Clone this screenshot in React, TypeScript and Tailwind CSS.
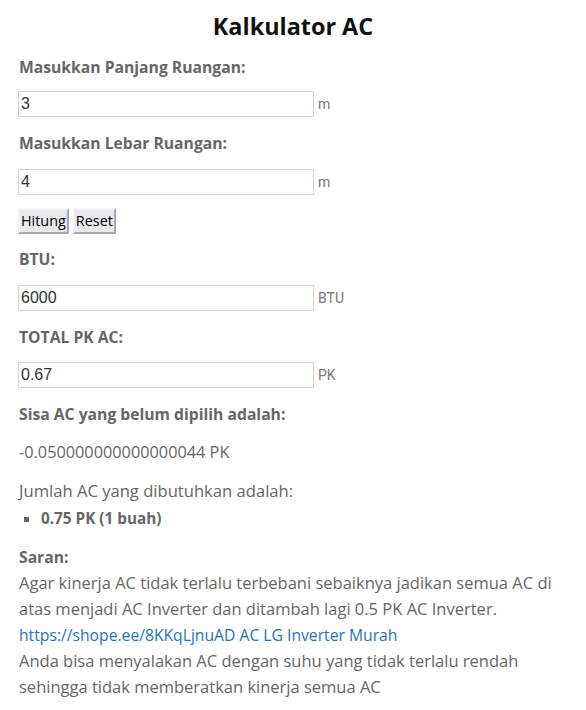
export default function App() {
  const font = { fontFamily: '"Open Sans", "DejaVu Sans", sans-serif' }

  const Field = ({ value, unit }: { value: string; unit: string }) => (
    <div className="flex items-center">
      <input
        readOnly
        value={value}
        className="w-[296px] h-[26px] border border-[#d4d4d4] bg-white px-[2px] text-[16px] text-[#333] outline-none font-['Liberation_Sans',Arial,sans-serif]"
      />
      <span className="ml-[4px] text-[14px] text-[#777] font-['Roboto',sans-serif]">{unit}</span>
    </div>
  )

  const Label = ({ children, className = "" }: { children: React.ReactNode; className?: string }) => (
    <div className={`text-[15.7px] leading-[22px] font-bold text-[#666] ${className}`}>{children}</div>
  )

  return (
    <div className="min-h-screen bg-white px-[18px] text-[#666]" style={font}>
      <h1 className="pt-[8px] text-center text-[23.4px] leading-[36px] font-bold text-[#111]">Kalkulator AC</h1>

      <Label className="mt-[12px] pl-[1px]">Masukkan Panjang Ruangan:</Label>
      <div className="mt-[13px]">
        <Field value="3" unit="m" />
      </div>

      <Label className="mt-[15px] pl-[1px]">Masukkan Lebar Ruangan:</Label>
      <div className="mt-[15px]">
        <Field value="4" unit="m" />
      </div>

      <div className="mt-[13px] flex gap-[4px]">
        <button className="h-[26px] px-[1px] bg-[#e9e9ed] text-[14.4px] text-black border-2 border-t-[#f4f4f6] border-l-[#f4f4f6] border-r-[#a8a8b0] border-b-[#a8a8b0] leading-none">
          Hitung
        </button>
        <button className="h-[26px] px-[1px] bg-[#e9e9ed] text-[14.4px] text-black border-2 border-t-[#f4f4f6] border-l-[#f4f4f6] border-r-[#a8a8b0] border-b-[#a8a8b0] leading-none">
          Reset
        </button>
      </div>

      <Label className="mt-[14px] pl-[1px]">BTU:</Label>
      <div className="mt-[15px]">
        <Field value="6000" unit="BTU" />
      </div>

      <Label className="mt-[15px] pl-[1px]">TOTAL PK AC:</Label>
      <div className="mt-[14px]">
        <Field value="0.67" unit="PK" />
      </div>

      <Label className="mt-[15px] pl-[1px]">Sisa AC yang belum dipilih adalah:</Label>
      <p className="mt-[16px] pl-[1px] text-[16.3px] leading-[22px]">-0.050000000000000044 PK</p>

      <p className="mt-[17px] pl-[1px] text-[16.6px] leading-[22px]">Jumlah AC yang dibutuhkan adalah:</p>
      <ul className="mt-[5px] pl-[23px] list-[square] text-[15.3px] leading-[22px] font-bold">
        <li>0.75 PK (1 buah)</li>
      </ul>

      <div className="mt-[15px] pl-[1px] pr-[2px] text-[16.5px] leading-[26px]">
        <div className="font-bold text-[15.7px]">Saran:</div>
        <p>
          Agar kinerja AC tidak terlalu terbebani sebaiknya jadikan semua AC di atas menjadi AC Inverter dan ditambah
          lagi 0.5 PK AC Inverter.
        </p>
        <a href="#" className="block text-[15.7px] text-[#1e73be]">
          https://shope.ee/8KKqLjnuAD AC LG Inverter Murah
        </a>
        <p>Anda bisa menyalakan AC dengan suhu yang tidak terlalu rendah sehingga tidak memberatkan kinerja semua AC</p>
      </div>
    </div>
  )
}
